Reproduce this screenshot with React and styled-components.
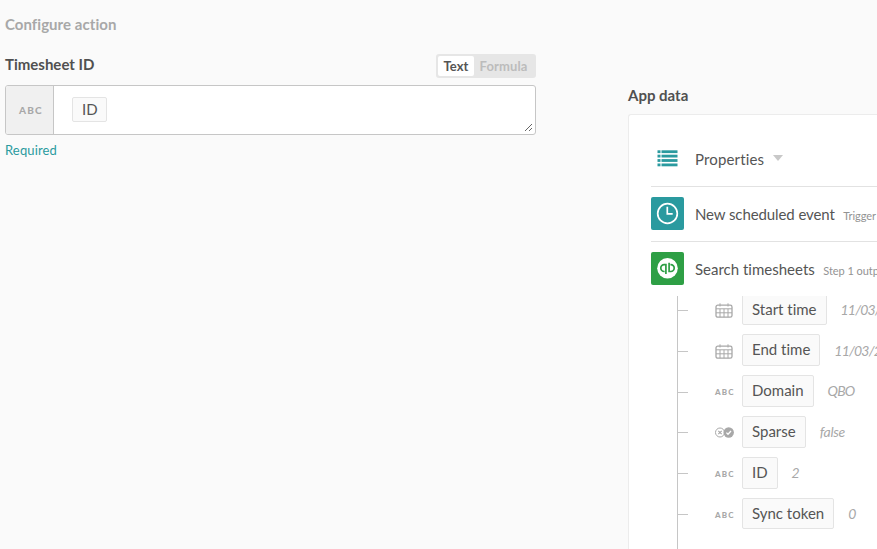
import React from "react";
import styled, { createGlobalStyle } from "styled-components";

const GlobalStyle = createGlobalStyle`
  * { box-sizing: border-box; }
  html, body { margin: 0; background: #fafafa; }
  body {
    font-family: Lato, "Liberation Sans", sans-serif;
    font-size: 15px;
    font-variant-ligatures: none;
    color: #555;
    overflow: hidden;
  }
`;

const Page = styled.main`
  display: flex;
  justify-content: space-between;
  width: 877px;
  height: 549px;
  padding-left: 5px;
  overflow: hidden;
`;

const Form = styled.section`
  width: 531px;
  padding-top: 14px;
`;

const SectionTitle = styled.h2`
  margin: 0;
  font-size: 15px;
  line-height: 20px;
  font-weight: 700;
  letter-spacing: 0.05px;
  color: #a8a8a8;
`;

const FieldHeader = styled.div`
  display: flex;
  justify-content: space-between;
  height: 31px;
  margin-top: 20px;
`;

const Label = styled.label`
  font-weight: 700;
  line-height: 20px;
  color: #505050;
`;

const Toggle = styled.div`
  display: flex;
  width: 100px;
  height: 24px;
  padding: 2px;
  border-radius: 3px;
  background: #e6e6e6;
`;

const ToggleOption = styled.button`
  flex: 0 0 ${(p) => (p.$active ? "36px" : "59px")};
  padding: 0;
  border: 0;
  border-radius: 2px;
  background: ${(p) => (p.$active ? "#fff" : "transparent")};
  color: ${(p) => (p.$active ? "#555" : "#bcbcbc")};
  font: 700 13px/20px Lato, sans-serif;
  letter-spacing: 0.1px;
`;

const InputBox = styled.div`
  display: flex;
  height: 50px;
  border: 1px solid #c6c6c6;
  border-radius: 3px;
  background: #fff;
  overflow: hidden;
`;

const InputType = styled.div`
  display: flex;
  align-items: center;
  justify-content: center;
  width: 48px;
  padding-left: 3px;
  border-right: 1px solid #c6c6c6;
  background: #f0f0f0;
`;

const InputBody = styled.div`
  flex: 1;
  display: flex;
  justify-content: space-between;
  padding: 11px 2px 2px 18px;
`;

const Grip = styled.svg`
  align-self: flex-end;
  width: 9px;
  height: 9px;
`;

const TypeText = styled.span`
  font-size: ${(p) => p.$size || "8px"};
  line-height: 10px;
  font-weight: 900;
  letter-spacing: 1.2px;
  color: #a8a8a8;
`;

const Pill = styled.span`
  display: block;
  height: ${(p) => (p.$compact ? "25px" : "31.5px")};
  padding: ${(p) => (p.$compact ? "0 8.4px 0 9px" : "0.1px 9px 0")};
  border: 1px solid #e4e4e4;
  border-radius: 2px;
  background: #fafafa;
  line-height: ${(p) => (p.$compact ? "23px" : "29px")};
  white-space: nowrap;
`;

const Hint = styled.p`
  margin: 6px 0 0;
  font-size: 13px;
  line-height: 18px;
  letter-spacing: 0.15px;
  color: #2a9a9f;
`;

const DataColumn = styled.aside`
  display: flex;
  flex-direction: column;
  width: 249px;
  padding-top: 85px;
`;

const DataTitle = styled.h3`
  flex: none;
  height: 29px;
  margin: 0;
  font-size: 15px;
  line-height: 20px;
  font-weight: 700;
  color: #505050;
`;

const Panel = styled.div`
  flex: 1;
  display: flex;
  flex-direction: column;
  min-height: 0;
  padding: 17px 0 0 22px;
  border: solid #ececec;
  border-width: 1px 0 0 1px;
  border-radius: 3px 0 0 0;
  background: #fff;
  overflow: hidden;
`;

const Source = styled.div`
  flex: none;
  display: flex;
  align-items: center;
  height: ${(p) => (p.$last ? "54px" : "55px")};
  border-bottom: ${(p) => (p.$last ? "0" : "1px solid #e2e2e2")};
  letter-spacing: ${(p) => p.$tracking || "0"};
  white-space: nowrap;
`;

const SourceIcon = styled.span`
  flex: none;
  display: flex;
  align-items: center;
  justify-content: center;
  width: 33px;
  height: 33px;
  margin: 0 11px 1.2px 0;
  border-radius: 2px;
  background: ${(p) => p.$color || "transparent"};
`;

const SourceNote = styled.span`
  margin: 3px 0 0 8.5px;
  font-size: 11px;
  letter-spacing: -0.05px;
  color: #939393;
`;

const Caret = styled.span`
  margin: -3px 0 0 8.5px;
  border: 5px solid transparent;
  border-top: 6px solid #c8c8c8;
  border-bottom: 0;
`;

const Tree = styled.div`
  flex: 1;
  display: flex;
  flex-direction: column;
  min-height: 0;
  margin-left: 26px;
  border-left: 1px solid #c6c6c6;
  overflow: hidden;
`;

const TreeItems = styled.div`
  margin-top: -7.25px;
`;

const TreeRow = styled.div`
  display: flex;
  align-items: center;
  height: 40.9px;
  white-space: nowrap;
`;

const Tick = styled.span`
  flex: none;
  width: 10px;
  height: 1px;
  margin: 2.1px 27px 0 0;
  background: #c6c6c6;
`;

const TypeSlot = styled.span`
  flex: none;
  display: flex;
  align-items: center;
  width: 27px;
  height: 18px;
  padding-top: 2px;
`;

const Sample = styled.em`
  margin-left: 14px;
  font-size: 14px;
  letter-spacing: ${(p) => (p.$type === "boolean" ? "-0.3px" : "-0.8px")};
  color: #a8a8a8;
`;

const ListIcon = () => (
  <svg width="21" height="17" viewBox="0 0 21 17" fill="#2a9a9f">
    {[0, 4.4, 8.8, 13.2].map((y) => (
      <g key={y}>
        <rect x="0.5" y={y + 0.3} width="3" height="2.8" />
        <rect x="4.5" y={y + 0.3} width="16" height="2.8" />
      </g>
    ))}
  </svg>
);

const ClockIcon = () => (
  <svg width="23" height="23" viewBox="0 0 23 23" fill="none" stroke="#fff" strokeWidth="1.7">
    <circle cx="11.5" cy="11.5" r="9.8" />
    <path d="M11.3 4.8v7h5.4" />
  </svg>
);

const QuickBooksIcon = () => (
  <svg width="23" height="23" viewBox="0 0 23 23">
    <circle cx="11.5" cy="11.3" r="10.3" fill="#fff" />
    <g fill="none" stroke="#2e9f45" strokeWidth="1.7">
      <path d="M9.9 16.9V7.7H8.2a3.4 3.4 0 0 0 0 6.8h.4" />
      <path d="M13.1 5.7v8.8h1.7a3.4 3.4 0 0 0 0-6.8h-.4" />
    </g>
  </svg>
);

const CalendarIcon = () => (
  <svg width="18" height="15" viewBox="0 0 18 15" fill="none" stroke="#a8a8a8">
    <rect x="1" y="2.2" width="16" height="12" rx="1.8" strokeWidth="1.3" />
    <path d="M1 5.8h16M1 9.8h16M5 5.8v8.4M9 5.8v8.4M13 5.8v8.4M5 .3v3.2M13 .3v3.2" />
  </svg>
);

const BooleanIcon = () => (
  <svg width="19" height="11" viewBox="0 0 19 11" fill="none">
    <circle cx="5" cy="5.5" r="4.5" stroke="#a8a8a8" />
    <path d="M3.3 3.8l3.4 3.4M6.7 3.8L3.3 7.2" stroke="#a8a8a8" strokeWidth="1.1" />
    <circle cx="13.7" cy="5.5" r="5.2" fill="#a8a8a8" />
    <path d="M11.4 5.6l1.6 1.6 3-3.2" stroke="#fff" strokeWidth="1.3" />
  </svg>
);

const typeIcons = {
  date: <CalendarIcon />,
  boolean: <BooleanIcon />,
  text: <TypeText>ABC</TypeText>,
};

const fields = [
  { name: "Start time", type: "date", sample: "11/03/2020" },
  { name: "End time", type: "date", sample: "11/03/2020" },
  { name: "Domain", type: "text", sample: "QBO" },
  { name: "Sparse", type: "boolean", sample: "false" },
  { name: "ID", type: "text", sample: "2" },
  { name: "Sync token", type: "text", sample: "0" },
];

export default function App() {
  return (
    <Page>
      <GlobalStyle />
      <Form>
        <SectionTitle>Configure action</SectionTitle>
        <FieldHeader>
          <Label>Timesheet ID</Label>
          <Toggle>
            <ToggleOption $active>Text</ToggleOption>
            <ToggleOption>Formula</ToggleOption>
          </Toggle>
        </FieldHeader>
        <InputBox>
          <InputType>
            <TypeText $size="10px">ABC</TypeText>
          </InputType>
          <InputBody>
            <Pill $compact>ID</Pill>
            <Grip viewBox="0 0 9 9" stroke="#555" strokeWidth="0.9">
              <path d="M1 8L8 1M5 8L8 5" />
            </Grip>
          </InputBody>
        </InputBox>
        <Hint>Required</Hint>
      </Form>
      <DataColumn>
        <DataTitle>App data</DataTitle>
        <Panel>
          <Source $tracking="0.15px">
            <SourceIcon><ListIcon /></SourceIcon>
            Properties
            <Caret />
          </Source>
          <Source $tracking="-0.1px">
            <SourceIcon $color="#2a9a9f"><ClockIcon /></SourceIcon>
            New scheduled event
            <SourceNote>Trigger output</SourceNote>
          </Source>
          <Source $last>
            <SourceIcon $color="#2e9f45"><QuickBooksIcon /></SourceIcon>
            Search timesheets
            <SourceNote>Step 1 output</SourceNote>
          </Source>
          <Tree>
            <TreeItems>
              {fields.map((f) => (
                <TreeRow key={f.name}>
                  <Tick />
                  <TypeSlot>{typeIcons[f.type]}</TypeSlot>
                  <Pill>{f.name}</Pill>
                  <Sample $type={f.type}>{f.sample}</Sample>
                </TreeRow>
              ))}
            </TreeItems>
          </Tree>
        </Panel>
      </DataColumn>
    </Page>
  );
}
